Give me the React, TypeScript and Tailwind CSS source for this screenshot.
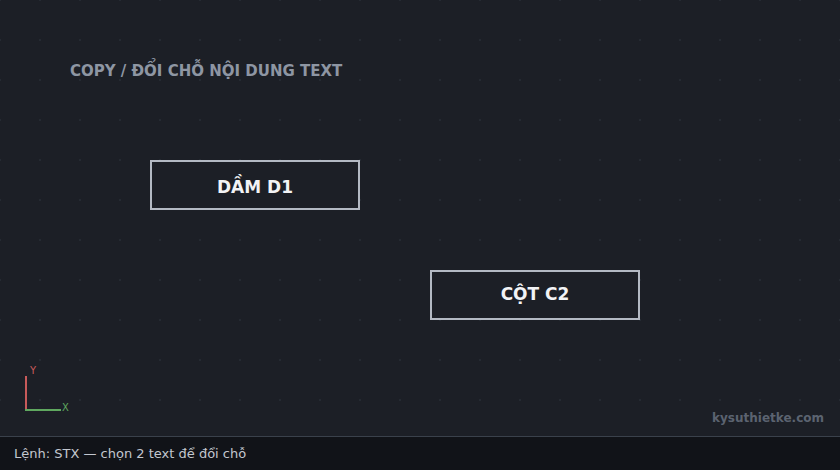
import React from "react";

export default function App() {
  const font = { fontFamily: '"DejaVu Sans", "Noto Sans", sans-serif' };
  return (
    <div className="w-[840px] h-[470px] flex flex-col bg-[#1c1f26] overflow-hidden" style={font}>
      <div
        className="relative flex-1 bg-[#1c1f26]"
        style={{
          backgroundImage: "radial-gradient(circle, #252a32 1px, transparent 1.2px)",
          backgroundSize: "40px 40px",
          backgroundPosition: "20px 20px",
        }}
      >
        <div className="absolute left-[70px] top-[62px] text-[15px] font-bold text-[#8e96a3] leading-[18px]">
          COPY / ĐỔI CHỖ NỘI DUNG TEXT
        </div>
        <div className="absolute left-[150px] top-[160px] w-[210px] h-[50px] border-2 border-[#b3b9c3] bg-[#1c1f26] flex items-center justify-center pt-[5px] text-[17px] font-bold text-[#f2f3f5]">
          DẦM D1
        </div>
        <div className="absolute left-[430px] top-[270px] w-[210px] h-[50px] border-2 border-[#b3b9c3] bg-[#1c1f26] flex items-center justify-center text-[17px] font-bold text-[#f2f3f5]">
          CỘT C2
        </div>
        <svg className="absolute left-0 top-[360px]" width="90" height="60">
          <line x1="26" y1="16" x2="26" y2="51" stroke="#c75a5a" strokeWidth="2" />
          <line x1="25" y1="50" x2="61" y2="50" stroke="#5fa85f" strokeWidth="2" />
          <text x="30" y="14" fill="#c75a5a" fontSize="10" fontFamily="DejaVu Sans">Y</text>
          <text x="62" y="51" fill="#5fa85f" fontSize="10" fontFamily="DejaVu Sans">X</text>
        </svg>
        <div className="absolute right-[16px] top-[409px] text-[12px] font-bold text-[#5b6370]">
          kysuthietke.com
        </div>
      </div>
      <div className="h-[34px] shrink-0 bg-[#111318] border-t border-[#3a414b] flex items-center px-[14px] text-[13px] text-[#c3c7cf]">
        Lệnh: STX — chọn 2 text để đổi chỗ
      </div>
    </div>
  );
}
